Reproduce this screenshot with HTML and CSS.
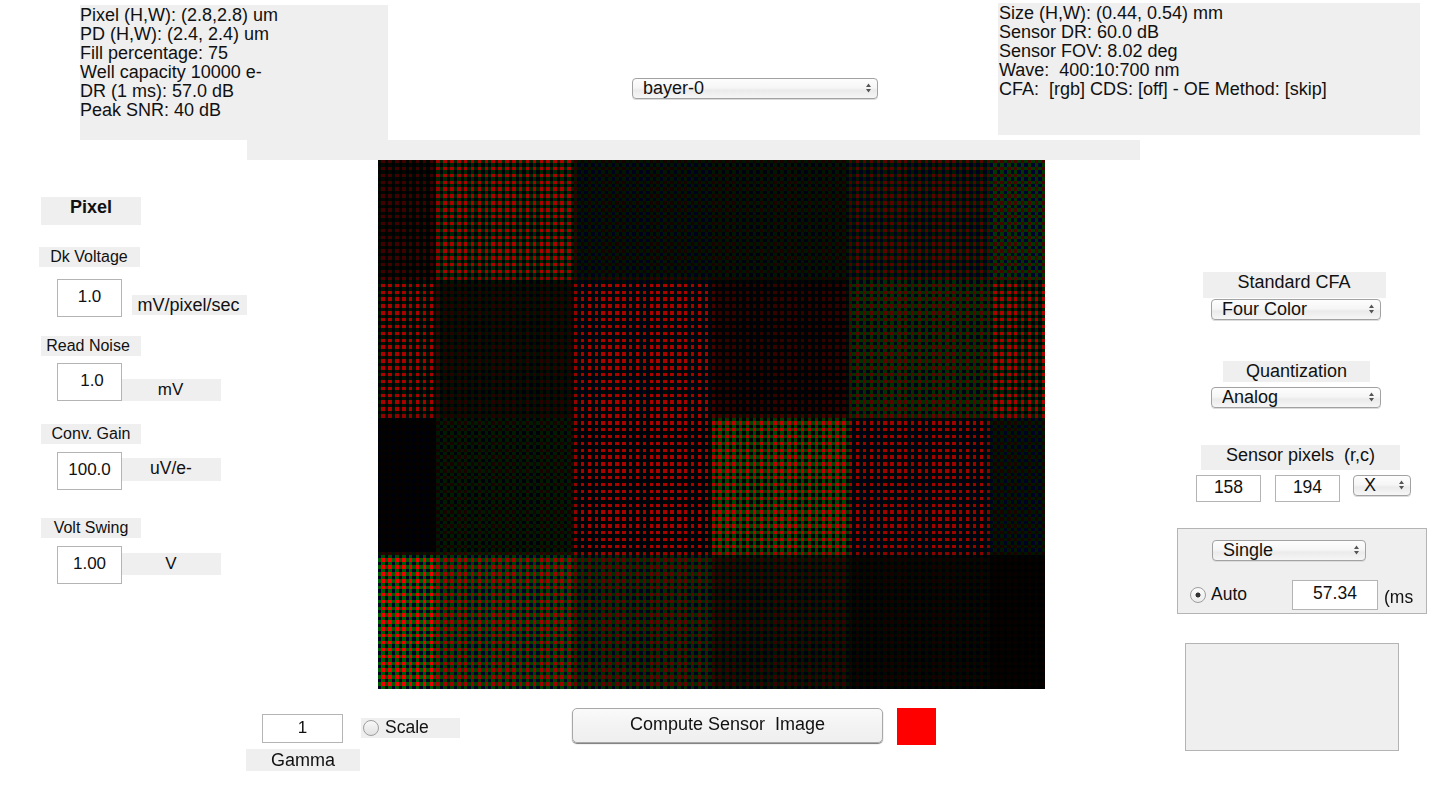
FILE: index.html
```html
<!DOCTYPE html>
<html lang="en">
<head>
<meta charset="utf-8">
<title>Sensor Image</title>
<link rel="stylesheet" href="styles.css">
</head>
<body>
<div class="app">
  <header class="top">
    <div class="info info-left">Pixel (H,W): (2.8,2.8) um
PD (H,W): (2.4, 2.4) um
Fill percentage: 75
Well capacity 10000 e-
DR (1 ms): 57.0 dB
Peak SNR: 40 dB</div>
    <div class="select select-top">
      <select><option>bayer-0</option></select>
      <svg class="arrows" viewBox="0 0 7 11" width="5" height="10" preserveAspectRatio="none"><path d="M3.5 0.5 7 4.5H0zM3.5 10.5 0 6.5H7z"/></svg>
    </div>
    <div class="info info-right">Size (H,W): (0.44, 0.54) mm
Sensor DR: 60.0 dB
Sensor FOV: 8.02 deg
Wave:  400:10:700 nm
CFA:  [rgb] CDS: [off] - OE Method: [skip]</div>
  </header>
  <div class="bar"></div>
  <main class="main">
    <section class="left">
      <div class="tag tag-title">Pixel</div>
      <div class="tag tag-dk">Dk Voltage</div>
      <div class="field field-dk">
        <input class="num" value="1.0">
        <span class="unit unit-dk">mV/pixel/sec</span>
      </div>
      <div class="tag tag-read">Read Noise</div>
      <div class="field field-read">
        <input class="num num-shift" value="1.0">
        <span class="unit unit-read">mV</span>
      </div>
      <div class="tag tag-conv">Conv. Gain</div>
      <div class="field field-conv">
        <input class="num" value="100.0">
        <span class="unit unit-conv">uV/e-</span>
      </div>
      <div class="tag tag-volt">Volt Swing</div>
      <div class="field field-volt">
        <input class="num" value="1.00">
        <span class="unit unit-volt">V</span>
      </div>
    </section>
    <canvas id="sensor" class="sensor" width="667" height="529"></canvas>
    <section class="right">
      <div class="rtag rtag-cfa">Standard CFA</div>
      <div class="select select-wide select-cfa">
        <select><option>Four Color</option></select>
        <svg class="arrows" viewBox="0 0 7 11" width="5" height="10" preserveAspectRatio="none"><path d="M3.5 0.5 7 4.5H0zM3.5 10.5 0 6.5H7z"/></svg>
      </div>
      <div class="rtag rtag-quant">Quantization</div>
      <div class="select select-wide select-quant">
        <select><option>Analog</option></select>
        <svg class="arrows" viewBox="0 0 7 11" width="5" height="10" preserveAspectRatio="none"><path d="M3.5 0.5 7 4.5H0zM3.5 10.5 0 6.5H7z"/></svg>
      </div>
      <div class="rtag rtag-size">Sensor pixels  (r,c)</div>
      <div class="size-row">
        <input class="size-num" value="158">
        <input class="size-num" value="194">
        <div class="select select-x">
          <select><option>X</option></select>
          <svg class="arrows" viewBox="0 0 7 11" width="5" height="10" preserveAspectRatio="none"><path d="M3.5 0.5 7 4.5H0zM3.5 10.5 0 6.5H7z"/></svg>
        </div>
      </div>
      <div class="exposure">
        <div class="select select-single">
          <select><option>Single</option></select>
          <svg class="arrows" viewBox="0 0 7 11" width="5" height="10" preserveAspectRatio="none"><path d="M3.5 0.5 7 4.5H0zM3.5 10.5 0 6.5H7z"/></svg>
        </div>
        <div class="exp-row">
          <input class="radio radio-on" type="radio" checked>
          <span class="auto">Auto</span>
          <input class="exp-num" value="57.34">
          <span class="ms">(ms</span>
        </div>
      </div>
      <div class="blank"></div>
    </section>
    <section class="bottom">
      <div class="gamma">
        <input class="gamma-num" value="1">
        <div class="gamma-tag">Gamma</div>
      </div>
      <label class="scale"><input class="radio" type="radio"><span>Scale</span></label>
      <button class="compute" type="button">Compute Sensor  Image</button>
      <div class="swatch"></div>
    </section>
  </main>
</div>
<script src="script.js"></script>
</body>
</html>
```
FILE: styles.css
```css
* { box-sizing: border-box; }
html, body { margin: 0; padding: 0; background: #fff; }
body { overflow: hidden; }
.app {
  width: 1435px;
  height: 794px;
  font-family: "Liberation Sans", Arial, sans-serif;
  font-size: 18px;
  color: #111;
}
input, select, button { font-family: inherit; color: inherit; margin: 0; }

/* top strip */
.top { display: flex; align-items: flex-start; height: 140px; }
.info { background: #efefef; white-space: pre; line-height: 19px; padding-top: 1px; }
.info-left { margin: 5px 0 0 80px; width: 308px; height: 135px; }
.info-right { margin: 3px 0 0 120px; padding-left: 1px; width: 422px; height: 132px; }
.select-top { margin: 78px 0 0 244px; width: 246px; height: 21px; }
.bar { margin-left: 247px; width: 893px; height: 20px; background: #efefef; }

/* selects */
.select { position: relative; display: block; flex: none; }
.select select {
  display: block;
  width: 100%;
  height: 100%;
  appearance: none;
  -webkit-appearance: none;
  border: 1px solid #a2a2a2;
  border-radius: 4px;
  padding: 0 0 0 10px;
  font-size: 18px;
  line-height: 19px;
  background: linear-gradient(#fdfdfd 0%, #f6f6f6 45%, #ebebeb 60%, #f6f6f6 100%);
  box-shadow: 0 1px 0 #dcdcdc;
}
.arrows { position: absolute; right: 7px; top: 5px; fill: #555; pointer-events: none; }

/* main grid */
.main {
  display: grid;
  grid-template-columns: 378px 667px 390px;
  grid-template-rows: 529px 105px;
}
.sensor { display: block; background: #000; }

/* left column */
.tag, .unit, .rtag, .gamma-tag { background: #efefef; text-align: center; }
.tag { width: 100px; height: 20px; font-size: 16px; line-height: 20px; margin-left: 41px; }
.tag-title { margin-top: 37px; height: 28px; font-size: 18px; font-weight: bold; line-height: 20px; }
.tag-dk { margin-top: 22px; margin-left: 39px; width: 101px; padding-right: 1px; }
.tag-read { margin-top: 19px; padding-right: 6px; }
.tag-conv { margin-top: 23px; }
.tag-volt { margin-top: 28px; }
.field { display: flex; align-items: flex-start; margin-left: 57px; }
.field-dk { margin-top: 12px; }
.field-read { margin-top: 7px; }
.field-conv, .field-volt { margin-top: 8px; }
.num {
  flex: none;
  position: relative;
  z-index: 1;
  width: 65px;
  height: 38px;
  padding: 0 0 3px;
  border: 1px solid #b4b4b4;
  border-radius: 0;
  background: #fff;
  font-size: 17px;
  text-align: center;
  outline: none;
}
.num-shift { padding-left: 5px; }
.unit { font-size: 17px; flex: none; width: 100px; }
.unit-dk { margin: 16px 0 0 10px; width: 115px; height: 20px; font-size: 18px; line-height: 20px; padding-right: 2px; }
.unit-read { margin: 16px 0 0 -1px; height: 22px; line-height: 22px; padding-right: 1px; }
.unit-conv { margin: 6px 0 0 -1px; height: 23px; line-height: 20px; font-size: 17.5px; }
.unit-volt { margin: 7px 0 0 -1px; height: 22px; line-height: 21px; }

/* right column */
.rtag { line-height: 20px; }
.rtag-cfa { margin: 112px 0 0 158px; width: 183px; height: 26px; padding-right: 1px; }
.select-wide { margin-left: 166px; width: 170px; height: 21px; }
.select-cfa { margin-top: 1px; }
.rtag-quant { margin: 41px 0 0 178px; width: 147px; height: 21px; line-height: 21px; }
.select-quant { margin-top: 5px; }
.rtag-size { margin: 37px 0 0 156px; width: 199px; height: 25px; font-size: 18px; line-height: 21px; white-space: pre; }
.size-row { display: flex; align-items: flex-start; margin: 5px 0 0 151px; }
.size-num {
  flex: none;
  width: 65px;
  height: 27px;
  margin-right: 14px;
  padding: 0 0 2px;
  border: 1px solid #b4b4b4;
  border-radius: 0;
  font-size: 17.5px;
  text-align: center;
  outline: none;
}
.select-x { margin-left: -1px; width: 58px; height: 21px; }
.select-x select { padding-left: 10px; padding-bottom: 1px; }
.exposure {
  margin: 26px 0 0 132px;
  width: 250px;
  height: 86px;
  padding-top: 11px;
  border: 1px solid #b4b4b4;
  background: #efefef;
}
.select-single { margin-left: 34px; width: 154px; height: 21px; }
.exp-row { display: flex; align-items: center; margin-top: 19px; height: 30px; padding-left: 12px; }
.radio {
  appearance: none;
  -webkit-appearance: none;
  flex: none;
  width: 16px;
  height: 16px;
  margin: 0;
  border: 1px solid #9e9e9e;
  border-radius: 50%;
  background: linear-gradient(#f8f8f8, #e2e2e2);
}
.radio-on { background: radial-gradient(circle, #333 0 2.2px, transparent 2.8px), linear-gradient(#fbfbfb, #ececec); }
.auto { margin: -2px 0 0 5px; width: 81px; font-size: 17.5px; }
.exp-num {
  flex: none;
  width: 86px;
  height: 30px;
  padding: 0 0 3px;
  border: 1px solid #b4b4b4;
  border-radius: 0;
  font-size: 17.5px;
  text-align: center;
  outline: none;
}
.ms { margin: 4px 0 0 6px; font-size: 17.5px; }
.blank {
  margin: 29px 0 0 140px;
  width: 214px;
  height: 108px;
  border: 1px solid #b4b4b4;
  background: #efefef;
}

/* bottom strip */
.bottom { grid-column: 1 / -1; display: flex; align-items: flex-start; padding-left: 246px; }
.gamma { flex: none; width: 114px; padding-top: 25px; }
.gamma-num {
  display: block;
  width: 81px;
  height: 29px;
  margin-left: 16px;
  padding: 0 0 2px;
  border: 1px solid #b4b4b4;
  border-radius: 0;
  font-size: 17px;
  text-align: center;
  outline: none;
}
.gamma-tag { margin-top: 6px; height: 22px; line-height: 22px; }
.scale {
  flex: none;
  display: flex;
  align-items: center;
  margin: 29px 0 0 1px;
  width: 99px;
  height: 20px;
  padding-left: 2px;
  background: #efefef;
  font-size: 17.5px;
  line-height: 18px;
}
.scale .radio { margin: 0 6px 0 0; }
.scale span { margin-top: -2px; }
.compute {
  flex: none;
  margin: 19px 0 0 112px;
  width: 311px;
  height: 35px;
  padding: 0 0 3px;
  border: 1px solid #a8a8a8;
  border-radius: 5px;
  background: linear-gradient(#fafafa, #f3f3f3 50%, #efefef);
  box-shadow: 0 1px 1px #777;
  font-size: 18px;
  white-space: pre;
}
.swatch { flex: none; margin: 19px 0 0 14px; width: 39px; height: 37px; background: #f00; }
```
FILE: script.js
```js
// Synthetic Bayer (G R / B G) mosaic of a colour-chart scene.
var COLS = 194, ROWS = 154;
var XB = [17, 57, 97, 137, 178, 194];
var YB = [35, 75, 115, 154];
var WEIGHT = [1, 4, 1];
var PATCHES = [
  [[62, 8, 4], [172, 40, 12], [24, 22, 28], [28, 22, 16], [92, 26, 30], [72, 54, 48]],
  [[172, 20, 10], [40, 16, 10], [172, 12, 26], [52, 5, 10], [95, 50, 22], [172, 36, 10]],
  [[8, 3, 12], [26, 28, 12], [170, 6, 14], [192, 70, 6], [162, 10, 24], [28, 24, 36]],
  [[238, 92, 38], [160, 66, 40], [100, 46, 30], [56, 22, 16], [24, 10, 8], [10, 3, 3]]
];

function band(bounds, v) {
  for (var i = 0; i < bounds.length; i++) { if (v < bounds[i]) return i; }
  return bounds.length - 1;
}

function channel(r, c, ch) {
  var sum = 0, n = 0;
  for (var dr = -1; dr <= 1; dr++) {
    for (var dc = -1; dc <= 1; dc++) {
      var rr = Math.min(ROWS - 1, Math.max(0, r + dr));
      var cc = Math.min(COLS - 1, Math.max(0, c + dc));
      var w = WEIGHT[dr + 1] * WEIGHT[dc + 1];
      sum += w * PATCHES[band(YB, rr)][band(XB, cc)][ch];
      n += w;
    }
  }
  return Math.round(sum / n);
}

var canvas = document.getElementById("sensor");
var ctx = canvas.getContext("2d");
var sx = canvas.width / COLS, sy = canvas.height / ROWS;
for (var r = 0; r < ROWS; r++) {
  var y0 = Math.round(r * sy), y1 = Math.round((r + 1) * sy);
  for (var c = 0; c < COLS; c++) {
    var x0 = Math.round(c * sx), x1 = Math.round((c + 1) * sx);
    var ch = r % 2 === 0 ? (c % 2 === 0 ? 1 : 0) : (c % 2 === 0 ? 2 : 1);
    var v = channel(r, c, ch);
    ctx.fillStyle = ch === 0 ? "rgb(" + v + ",0,0)" : ch === 1 ? "rgb(0," + v + ",0)" : "rgb(0,0," + v + ")";
    ctx.fillRect(x0, y0, x1 - x0, y1 - y0);
  }
}
```
